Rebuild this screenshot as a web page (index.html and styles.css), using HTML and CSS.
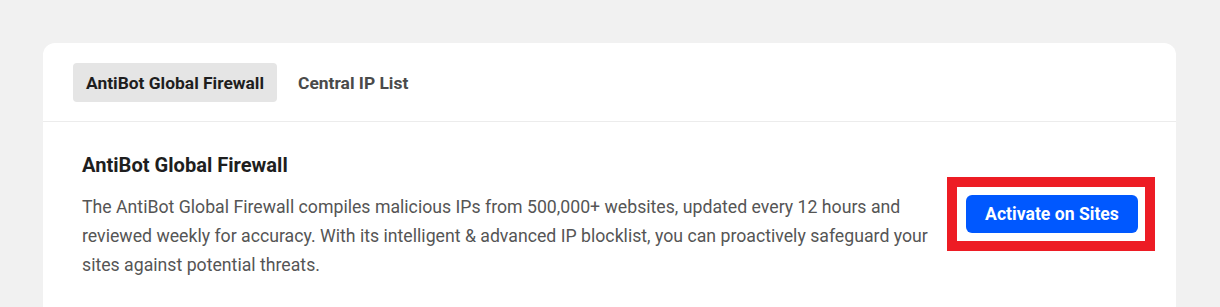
FILE: index.html
```html
<!DOCTYPE html>
<html lang="en">
<head>
<meta charset="utf-8">
<title>AntiBot Global Firewall</title>
<link rel="stylesheet" href="styles.css">
</head>
<body>
<div class="card">
  <div class="tabs">
    <button class="tab active">AntiBot Global Firewall</button>
    <button class="tab">Central IP List</button>
  </div>
  <div class="content">
    <div class="text">
      <h2 class="title">AntiBot Global Firewall</h2>
      <p class="desc">The AntiBot Global Firewall compiles malicious IPs from 500,000+ websites, updated every 12 hours and reviewed weekly for accuracy. With its intelligent &amp; advanced IP blocklist, you can proactively safeguard your sites against potential threats.</p>
    </div>
    <div class="action">
      <div class="highlight"></div>
      <button class="btn">Activate on Sites</button>
    </div>
  </div>
</div>
</body>
</html>
```
FILE: styles.css
```css
html, body {
  margin: 0;
  padding: 0;
  background: #f1f1f1;
  font-family: Roboto, "Liberation Sans", sans-serif;
  height: 307px;
  overflow: hidden;
}
.card {
  margin: 43px 0 0 43px;
  width: 1133px;
  height: 264px;
  background: #fff;
  border-radius: 12px 12px 0 0;
}
.tabs {
  display: flex;
  gap: 8px;
  padding: 20px 30px 19px;
  border-bottom: 1px solid #ececec;
}
.tab {
  font-family: inherit;
  font-size: 17.4px;
  font-weight: 700;
  color: #4a4a4a;
  background: transparent;
  border: 0;
  border-radius: 4px;
  height: 39px;
  padding: 0 13px;
}
.tab.active {
  background: #e5e5e5;
  color: #1e1e1e;
}
.content {
  display: flex;
  gap: 31px;
  padding: 30px 38px 0 39px;
}
.text {
  flex: 1;
}
.title {
  margin: 0;
  font-size: 20.1px;
  line-height: 26px;
  font-weight: 700;
  color: #1e1e1e;
}
.desc {
  margin: 15px 0 0;
  font-size: 17.7px;
  line-height: 29px;
  color: #555;
}
.action {
  position: relative;
  margin-top: 43px;
  align-self: flex-start;
}
.highlight {
  position: absolute;
  top: -18px;
  left: -19px;
  right: -17px;
  bottom: -18px;
  border: 10px solid #ed1c24;
}
.btn {
  position: relative;
  display: block;
  width: 172px;
  height: 38px;
  border: 0;
  border-radius: 6px;
  background: #0058ff;
  color: #fff;
  font-family: inherit;
  font-size: 17.6px;
  font-weight: 700;
}
```
